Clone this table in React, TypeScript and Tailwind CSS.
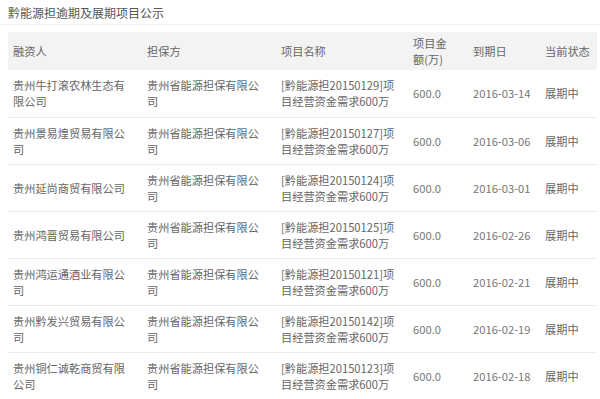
import React from 'react';

interface Row {
  borrower: string;
  guarantor: string;
  project: string;
  amount: string;
  due: string;
  status: string;
}

const rows: Row[] = [
  { borrower: '贵州牛打滚农林生态有限公司', guarantor: '贵州省能源担保有限公司', project: '[黔能源担20150129]项目经营资金需求600万', amount: '600.0', due: '2016-03-14', status: '展期中' },
  { borrower: '贵州景易煌贸易有限公司', guarantor: '贵州省能源担保有限公司', project: '[黔能源担20150127]项目经营资金需求600万', amount: '600.0', due: '2016-03-06', status: '展期中' },
  { borrower: '贵州延尚商贸有限公司', guarantor: '贵州省能源担保有限公司', project: '[黔能源担20150124]项目经营资金需求600万', amount: '600.0', due: '2016-03-01', status: '展期中' },
  { borrower: '贵州鸿晋贸易有限公司', guarantor: '贵州省能源担保有限公司', project: '[黔能源担20150125]项目经营资金需求600万', amount: '600.0', due: '2016-02-26', status: '展期中' },
  { borrower: '贵州鸿运通酒业有限公司', guarantor: '贵州省能源担保有限公司', project: '[黔能源担20150121]项目经营资金需求600万', amount: '600.0', due: '2016-02-21', status: '展期中' },
  { borrower: '贵州黔发兴贸易有限公司', guarantor: '贵州省能源担保有限公司', project: '[黔能源担20150142]项目经营资金需求600万', amount: '600.0', due: '2016-02-19', status: '展期中' },
  { borrower: '贵州铜仁诚乾商贸有限公司', guarantor: '贵州省能源担保有限公司', project: '[黔能源担20150123]项目经营资金需求600万', amount: '600.0', due: '2016-02-18', status: '展期中' },
];

export default function App() {
  return (
    <div
      className="w-[600px] h-[399px] overflow-hidden bg-white"
      style={{ fontFamily: '"Noto Sans CJK SC", "Noto Sans", sans-serif' }}
    >
      {/* Title */}
      <div className="h-[25px] pl-[8px] pt-[5px] text-[12px] leading-[16px] text-[#555] border-b border-[#f0f0f0]">
        黔能源担逾期及展期项目公示
      </div>

      <div className="pl-[8px] pr-[3px] pt-[7px]">
        <table className="w-full table-fixed border-collapse text-[11.2px] leading-[16px] text-[#666]">
          <colgroup>
            <col className="w-[134px]" />
            <col className="w-[134px]" />
            <col className="w-[132px]" />
            <col className="w-[60px]" />
            <col className="w-[72px]" />
            <col />
          </colgroup>
          <thead>
            <tr className="h-[38px] bg-[#f3f3f3] text-[#666] text-left">
              <th className="font-normal pl-[5px]">融资人</th>
              <th className="font-normal pl-[5px]">担保方</th>
              <th className="font-normal pl-[5px]">项目名称</th>
              <th className="font-normal pl-[5px] whitespace-nowrap">项目金<br />额(万)</th>
              <th className="font-normal pl-[5px]">到期日</th>
              <th className="font-normal pl-[5px]">当前状态</th>
            </tr>
          </thead>
          <tbody>
            {rows.map((r, i) => (
              <tr key={i} className="h-[47px] border-b border-[#ebebeb] align-middle">
                <td className="pl-[5px] pr-[10px] break-all">{r.borrower}</td>
                <td className="pl-[5px] pr-[10px] break-all">{r.guarantor}</td>
                <td className="pl-[5px] pr-[10px] break-all">{r.project}</td>
                <td className="pl-[5px] text-[#777]">{r.amount}</td>
                <td className="pl-[5px] text-[#777]">{r.due}</td>
                <td className="pl-[5px]">{r.status}</td>
              </tr>
            ))}
          </tbody>
        </table>
      </div>
    </div>
  );
}
